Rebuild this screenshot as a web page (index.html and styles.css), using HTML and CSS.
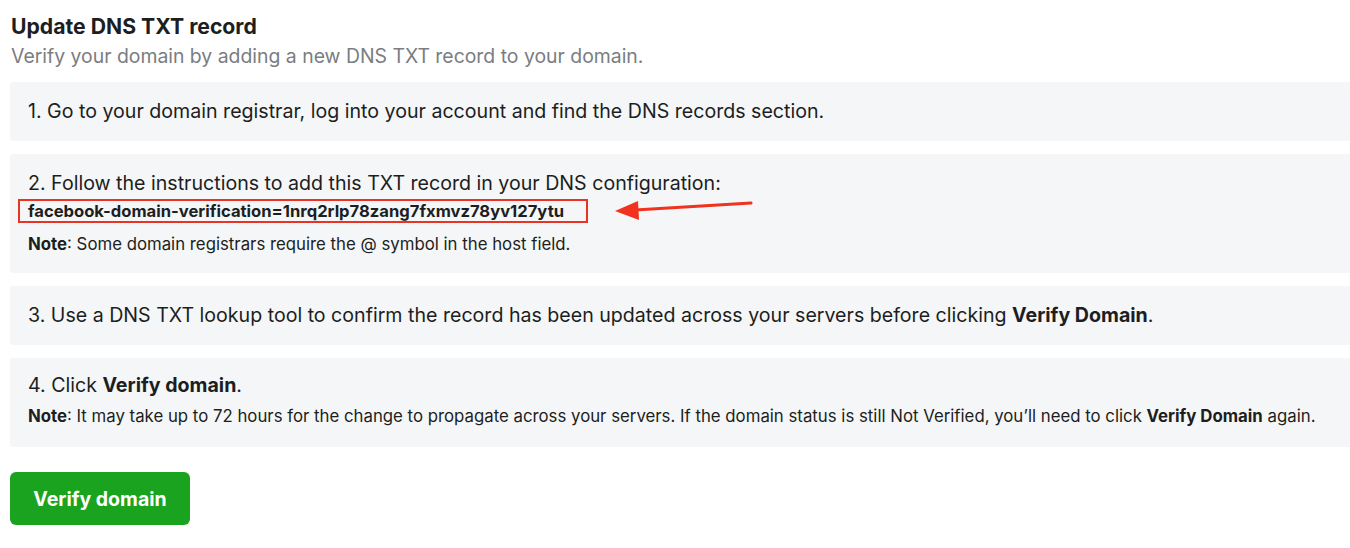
FILE: index.html
```html
<!DOCTYPE html>
<html>
<head>
<meta charset="utf-8">
<link rel="stylesheet" href="styles.css">
</head>
<body>
<div class="page">
  <h1 class="title">Update DNS TXT record</h1>
  <p class="subtitle">Verify your domain by adding a new DNS TXT record to your domain.</p>
  <div class="steps">
    <div class="step">
      <div class="step-text">1. Go to your domain registrar, log into your account and find the DNS records section.</div>
    </div>
    <div class="step step-2">
      <div class="step-text">2. Follow the instructions to add this TXT record in your DNS configuration:</div>
      <div class="code-row">
        <span class="code">facebook-domain-verification=1nrq2rlp78zang7fxmvz78yv127ytu</span>
        <svg class="arrow" width="140" height="24" viewBox="0 0 140 24">
          <line x1="136" y1="4" x2="20" y2="11" stroke="#f0321e" stroke-width="3" stroke-linecap="round"/>
          <polygon points="0,12 23,2 24,21" fill="#f0321e"/>
        </svg>
      </div>
      <div class="note"><b>Note</b>: Some domain registrars require the @ symbol in the host field.</div>
    </div>
    <div class="step">
      <div class="step-text">3. Use a DNS TXT lookup tool to confirm the record has been updated across your servers before clicking <b>Verify Domain</b>.</div>
    </div>
    <div class="step step-4">
      <div class="step-text">4. Click <b>Verify domain</b>.</div>
      <div class="note note-4"><b>Note</b>: It may take up to 72 hours for the change to propagate across your servers. If the domain status is still Not Verified, you’ll need to click <b>Verify Domain</b> again.</div>
    </div>
  </div>
  <button class="verify-btn">Verify domain</button>
</div>
</body>
</html>
```

FILE: styles.css
```css
html, body {
  margin: 0;
  padding: 0;
  background: #ffffff;
}
.page {
  padding: 12px 0 0 10px;
  font-family: Inter, "Liberation Sans", sans-serif;
  color: #1c1e21;
}
.title {
  margin: 0 0 0 1px;
  font-family: Inter, "Liberation Sans", sans-serif;
  font-size: 21.2px;
  font-weight: 700;
  line-height: 28px;
  color: #1c1e21;
}
.subtitle {
  margin: 2px 0 0 1px;
  font-family: Inter, "Liberation Sans", sans-serif;
  font-size: 19.4px;
  line-height: 28px;
  color: #7a7d81;
}
.steps {
  margin-top: 12px;
  display: flex;
  flex-direction: column;
  gap: 13px;
}
.step {
  background: #f5f6f7;
  border-radius: 3px 0 0 3px;
  padding: 17px 18px 18px 18px;
}
.step-text {
  font-size: 19.6px;
  line-height: 24px;
}
.step b {
  font-weight: 700;
}
.code-row {
  display: flex;
  align-items: center;
  margin-top: 4px;
  margin-left: -10px;
}
.code {
  display: inline-block;
  border: 2px solid #ea3323;
  padding: 0 22px 0 8px;
  font-size: 16.6px;
  font-weight: 700;
  line-height: 20px;
}
.arrow {
  margin-left: 27px;
}
.note {
  margin-top: 11px;
  font-size: 16.8px;
  line-height: 20px;
}
.step-2 {
  padding-bottom: 19px;
}
.step-4 {
  padding-top: 15px;
  padding-bottom: 21px;
}
.note-4 {
  margin-top: 9px;
}
.verify-btn {
  margin-top: 25px;
  width: 180px;
  height: 53px;
  border: none;
  border-radius: 6px;
  background: #1aa31e;
  color: #ffffff;
  font-family: Inter, "Liberation Sans", sans-serif;
  font-size: 19.5px;
  font-weight: 700;
  padding: 0;
  cursor: pointer;
}
```
